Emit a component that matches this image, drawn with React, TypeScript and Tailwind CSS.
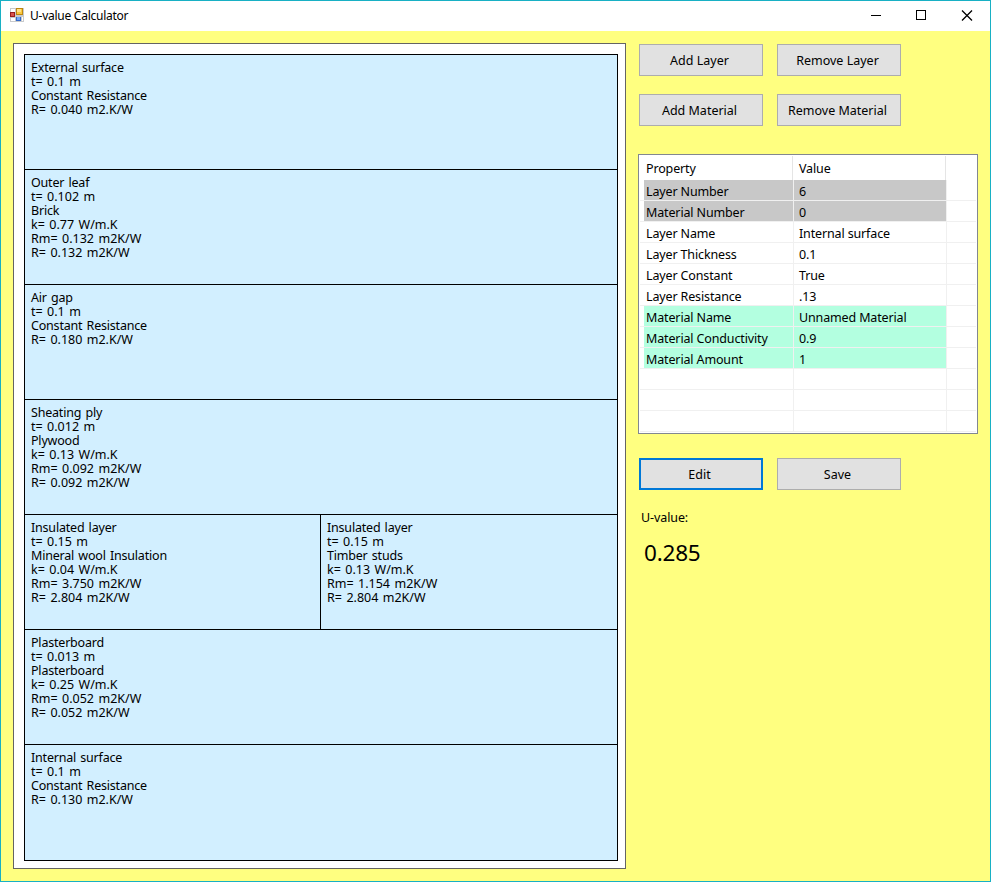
type Block = string[];

const layers: Block[][] = [
  [["External surface", "t= 0.1 m", "Constant Resistance", "R= 0.040 m2.K/W"]],
  [["Outer leaf", "t= 0.102 m", "Brick", "k= 0.77 W/m.K", "Rm= 0.132 m2K/W", "R= 0.132 m2K/W"]],
  [["Air gap", "t= 0.1 m", "Constant Resistance", "R= 0.180 m2.K/W"]],
  [["Sheating ply", "t= 0.012 m", "Plywood", "k= 0.13 W/m.K", "Rm= 0.092 m2K/W", "R= 0.092 m2K/W"]],
  [
    ["Insulated layer", "t= 0.15 m", "Mineral wool Insulation", "k= 0.04 W/m.K", "Rm= 3.750 m2K/W", "R= 2.804 m2K/W"],
    ["Insulated layer", "t= 0.15 m", "Timber studs", "k= 0.13 W/m.K", "Rm= 1.154 m2K/W", "R= 2.804 m2K/W"],
  ],
  [["Plasterboard", "t= 0.013 m", "Plasterboard", "k= 0.25 W/m.K", "Rm= 0.052 m2K/W", "R= 0.052 m2K/W"]],
  [["Internal surface", "t= 0.1 m", "Constant Resistance", "R= 0.130 m2.K/W"]],
];

const rows: [string, string, string][] = [
  ["Layer Number", "6", "bg-[#c8c8c8]"],
  ["Material Number", "0", "bg-[#c8c8c8]"],
  ["Layer Name", "Internal surface", ""],
  ["Layer Thickness", "0.1", ""],
  ["Layer Constant", "True", ""],
  ["Layer Resistance", ".13", ""],
  ["Material Name", "Unnamed Material", "bg-[#b3ffe0]"],
  ["Material Conductivity", "0.9", "bg-[#b3ffe0]"],
  ["Material Amount", "1", "bg-[#b3ffe0]"],
  ["", "", ""],
  ["", "", ""],
  ["", "", ""],
];

function Button({ label, focused = false }: { label: string; focused?: boolean }) {
  return (
    <button
      className={`flex h-8 w-[124px] items-center justify-center bg-[#e1e1e1] pt-0.5 pr-[3px] ${
        focused ? "border-2 border-[#0078d7]" : "border border-[#adadad]"
      }`}
    >
      {label}
    </button>
  );
}

function TitleBar() {
  return (
    <header className="flex h-[30px] items-start bg-white">
      <svg className="mt-[7px] ml-[9px]" width="14" height="14" shapeRendering="crispEdges">
        <rect width="14" height="14" fill="#c8cacc" />
        <rect x="1" y="1" width="4" height="3" fill="#fff" />
        <rect x="1" y="10" width="4" height="3" fill="#fff" />
        <rect x="12" y="9" width="1" height="4" fill="#fff" />
        <rect x="0" y="4" width="5" height="5" fill="#98201c" />
        <rect x="1" y="5" width="3" height="3" fill="#d8534d" />
        <rect x="6" y="0" width="7" height="7" fill="#bd8710" />
        <rect x="7" y="1" width="5" height="5" fill="#fbc93d" />
        <rect x="7" y="1" width="4" height="3" fill="#ffe18a" />
        <rect x="6" y="9" width="5" height="4" fill="#3569c9" />
        <rect x="7" y="9" width="3" height="3" fill="#75a9f3" />
      </svg>
      <h1 className="ml-1.5 pt-[7px] text-[12px] leading-4 tracking-[-0.25px]">U-value Calculator</h1>
      <svg className="mt-[9px] mr-[17px] ml-auto" width="102" height="11" fill="none" stroke="#000">
        <path d="M0 5.5h10M45.500 .5h9v9h-9z" shapeRendering="crispEdges" />
        <path d="M91 .5l10 10M101 .5l-10 10" strokeWidth="1.3" />
      </svg>
    </header>
  );
}

function PropertyList() {
  return (
    <div className="mt-7 -ml-px h-[280px] w-[340px] border border-[#828790] bg-white tracking-[-0.14px]">
      <div className="flex h-[25px] pt-px pl-[7px] leading-[25px]">
        <div className="h-6 w-[147px] border-r border-[#e5e5e5]">Property</div>
        <div className="h-6 w-[153px] border-r border-[#e5e5e5] pl-1.5">Value</div>
      </div>
      {rows.map(([name, value, color], i) => (
        <div key={i} className="mx-px flex h-[21px] border-b border-[#f0f0f0] pl-1 leading-6">
          <div className={`h-5 w-[149px] pl-0.5 ${color}`}>{name}</div>
          <div className="w-px bg-[#f0f0f0]" />
          <div className={`h-5 w-[152px] pl-[5px] ${color}`}>{value}</div>
          <div className="w-px bg-[#f0f0f0]" />
        </div>
      ))}
    </div>
  );
}

export default function App() {
  return (
    <div className="flex h-[882px] w-[991px] flex-col border border-[#18b0c4] bg-[#ffff80] font-['Noto_Sans',sans-serif] text-[12.5px] whitespace-nowrap text-black">
      <TitleBar />
      <main className="flex pt-3 pl-3">
        <section className="h-[826px] w-[613px] border border-[#646464] bg-white pt-2.5 pl-2.5">
          <div className="flex h-[807px] w-[594px] flex-col border-x border-b border-black bg-[#d2efff] leading-[14px] [word-spacing:1.2px]">
            {layers.map((blocks, i) => (
              <div key={i} className="flex h-[115px] border-t border-black">
                {blocks.map((lines, j) => (
                  <div
                    key={j}
                    className={
                      j
                        ? "border-l border-black pt-1.5 pl-1.5"
                        : blocks.length > 1
                          ? "w-[295px] pt-1.5 pl-1.5"
                          : "pt-1.5 pl-1.5"
                    }
                  >
                    {lines.map((line, k) => (
                      <div key={k} className={line.includes("=") ? "" : "tracking-[-0.2px]"}>
                        {line}
                      </div>
                    ))}
                  </div>
                ))}
              </div>
            ))}
          </div>
        </section>
        <aside className="ml-[13px] pt-px">
          <div className="grid w-[262px] grid-cols-2 gap-x-3.5 gap-y-[18px]">
            <Button label="Add Layer" />
            <Button label="Remove Layer" />
            <Button label="Add Material" />
            <Button label="Remove Material" />
          </div>
          <PropertyList />
          <div className="mt-6 flex gap-3.5">
            <Button label="Edit" focused />
            <Button label="Save" />
          </div>
          <div className="mt-[19px] ml-0.5 leading-[18px] tracking-[-0.1px]">U-value:</div>
          <div className="mt-2.5 ml-[5px] text-[22.5px] leading-8 tracking-[-0.2px]">0.285</div>
        </aside>
      </main>
    </div>
  );
}
